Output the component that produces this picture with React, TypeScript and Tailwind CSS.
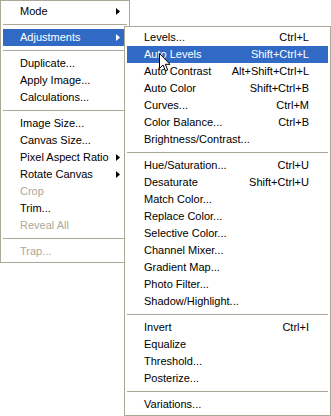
import React from 'react';

type Item =
  | { sep: true }
  | { label: string; shortcut?: string; sub?: boolean; active?: boolean; disabled?: boolean };

const mainItems: Item[] = [
  { label: 'Mode', sub: true },
  { sep: true },
  { label: 'Adjustments', sub: true, active: true },
  { sep: true },
  { label: 'Duplicate...' },
  { label: 'Apply Image...' },
  { label: 'Calculations...' },
  { sep: true },
  { label: 'Image Size...' },
  { label: 'Canvas Size...' },
  { label: 'Pixel Aspect Ratio', sub: true },
  { label: 'Rotate Canvas', sub: true },
  { label: 'Crop', disabled: true },
  { label: 'Trim...' },
  { label: 'Reveal All', disabled: true },
  { sep: true },
  { label: 'Trap...', disabled: true },
];

const adjustItems: Item[] = [
  { label: 'Levels...', shortcut: 'Ctrl+L' },
  { label: 'Auto Levels', shortcut: 'Shift+Ctrl+L', active: true },
  { label: 'Auto Contrast', shortcut: 'Alt+Shift+Ctrl+L' },
  { label: 'Auto Color', shortcut: 'Shift+Ctrl+B' },
  { label: 'Curves...', shortcut: 'Ctrl+M' },
  { label: 'Color Balance...', shortcut: 'Ctrl+B' },
  { label: 'Brightness/Contrast...' },
  { sep: true },
  { label: 'Hue/Saturation...', shortcut: 'Ctrl+U' },
  { label: 'Desaturate', shortcut: 'Shift+Ctrl+U' },
  { label: 'Match Color...' },
  { label: 'Replace Color...' },
  { label: 'Selective Color...' },
  { label: 'Channel Mixer...' },
  { label: 'Gradient Map...' },
  { label: 'Photo Filter...' },
  { label: 'Shadow/Highlight...' },
  { sep: true },
  { label: 'Invert', shortcut: 'Ctrl+I' },
  { label: 'Equalize' },
  { label: 'Threshold...' },
  { label: 'Posterize...' },
  { sep: true },
  { label: 'Variations...' },
];

const Arrow = ({ white }: { white?: boolean }) => (
  <svg width="4" height="7" viewBox="0 0 4 7" className="shrink-0">
    <path d="M0 0 L4 3.5 L0 7 Z" fill={white ? '#ffffff' : '#000000'} />
  </svg>
);

const MenuList = ({ items }: { items: Item[] }) => (
  <div className="flex flex-col border border-[#aca899] bg-white p-[2px]">
    {items.map((it, i) =>
      'sep' in it ? (
        <div key={i} className="flex h-[9px] items-center">
          <div className="h-px w-full bg-[#aca899]" />
        </div>
      ) : (
        <div
          key={i}
          className={
            'flex h-[17px] items-center justify-between pl-[17px] ' +
            (it.shortcut ? 'pr-[19px] ' : 'pr-[7px] ') +
            (it.active ? 'bg-[#316ac5] text-white' : it.disabled ? 'text-[#aca899]' : 'text-black')
          }
        >
          <span className="whitespace-nowrap">{it.label}</span>
          {it.shortcut && <span className="whitespace-nowrap">{it.shortcut}</span>}
          {it.sub && <Arrow white={it.active} />}
        </div>
      )
    )}
  </div>
);

// mouse pointer hovering over "Auto Levels"
const Cursor = () => (
  <svg width="12" height="19" viewBox="0 0 12 19" className="absolute left-[159px] top-[53px]">
    <path
      d="M0.5 0.5 L0.5 15.5 L4 12 L6.5 17.8 L8.7 16.9 L6.3 11.3 L11 11.3 Z"
      fill="#ffffff"
      stroke="#000000"
      strokeWidth="1"
    />
  </svg>
);

export default function App() {
  return (
    <div className="relative h-[416px] w-[331px] overflow-hidden bg-white font-['Liberation_Sans',Arial,sans-serif] text-[11px] leading-none">
      <div className="w-[130px]">
        <MenuList items={mainItems} />
      </div>
      <div className="absolute left-[124px] top-[26px] w-[207px]">
        <MenuList items={adjustItems} />
      </div>
      <Cursor />
    </div>
  );
}
